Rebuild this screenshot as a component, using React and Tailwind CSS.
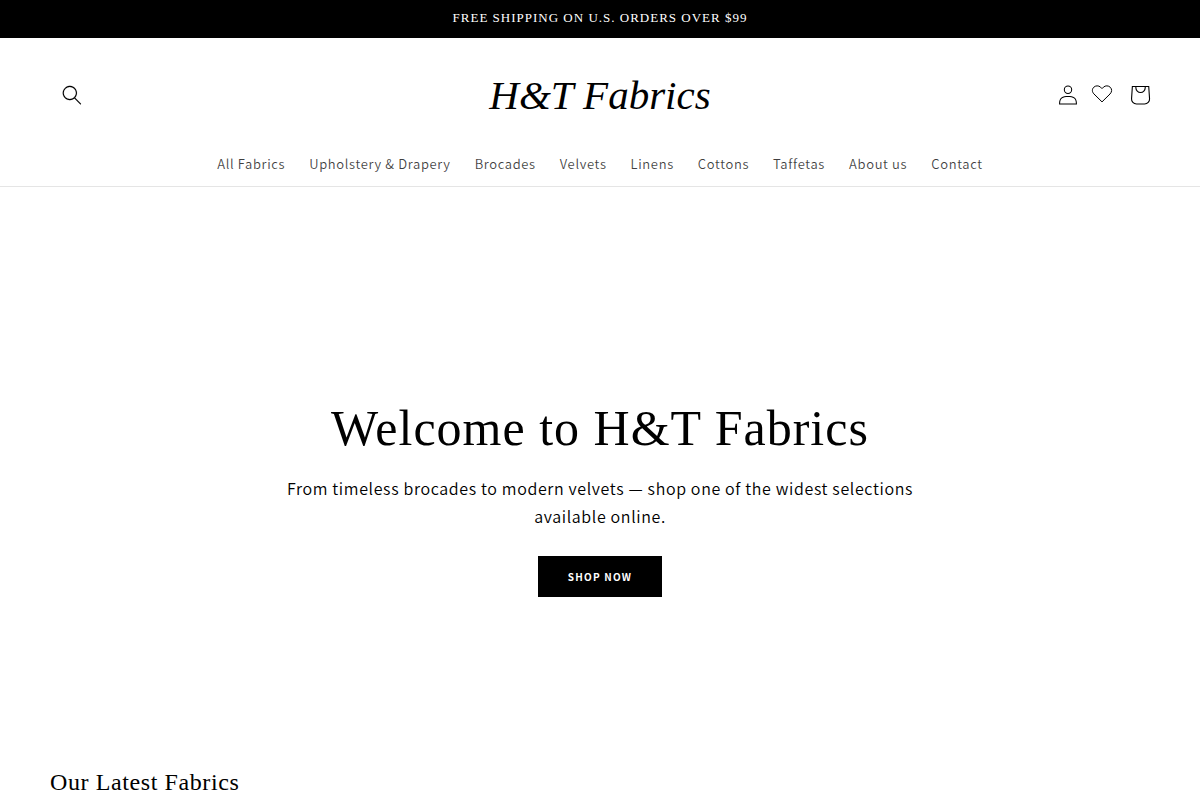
import React from 'react';

const navLinks = [
  'All Fabrics',
  'Upholstery & Drapery',
  'Brocades',
  'Velvets',
  'Linens',
  'Cottons',
  'Taffetas',
  'About us',
  'Contact',
];

function SearchIcon() {
  return (
    <svg className="w-5 h-5" viewBox="0 0 18 19" fill="none" aria-hidden="true">
      <path
        fillRule="evenodd"
        clipRule="evenodd"
        fill="currentColor"
        stroke="currentColor"
        strokeWidth="0.1"
        d="M11.03 11.68A5.784 5.784 0 112.85 3.5a5.784 5.784 0 018.18 8.18zm.26 1.12a6.78 6.78 0 11.72-.7l5.4 5.4a.5.5 0 11-.71.7l-5.41-5.4z"
      />
    </svg>
  );
}

function AccountIcon() {
  return (
    <svg className="w-5 h-5" viewBox="0 0 18 19" fill="none" aria-hidden="true">
      <path
        fillRule="evenodd"
        clipRule="evenodd"
        fill="currentColor"
        d="M6 4.5a3 3 0 116 0 3 3 0 01-6 0zm3-4a4 4 0 100 8 4 4 0 000-8zm5.58 12.15c1.12.83 1.83 2.24 1.92 4.85H1.5c.1-2.61.8-4.02 1.92-4.85C4.65 11.76 6.5 11.5 9 11.5s4.35.26 5.58 1.15zM9 10.5c-2.5 0-4.65.24-6.17 1.35C1.27 12.98.5 14.93.5 18v.5h17V18c0-3.07-.77-5.02-2.33-6.15-1.52-1.1-3.67-1.35-6.17-1.35z"
      />
    </svg>
  );
}

function HeartIcon() {
  return (
    <svg className="w-6 h-6" viewBox="0 0 24 24" fill="none" aria-hidden="true">
      <path
        stroke="currentColor"
        strokeWidth="1"
        strokeLinejoin="round"
        d="M12 18.9 4 11C1.9 8.9 1.9 6.1 3.7 4.3 5.6 2.4 8.6 2.4 10.5 4.1L12 5.6l1.5-1.5c1.9-1.7 4.9-1.7 6.8.2 1.8 1.8 1.8 4.6-.3 6.7z"
      />
    </svg>
  );
}

function CartIcon() {
  return (
    <svg className="w-11 h-11" viewBox="0 0 40 40" fill="none" aria-hidden="true">
      <path
        fillRule="evenodd"
        fill="currentColor"
        d="M15.75 11.8h-3.16l-.77 11.6a5 5 0 004.99 5.34h7.38a5 5 0 004.99-5.33L28.4 11.8zm0 1h-2.22l-.71 10.67a4 4 0 003.99 4.27h7.38a4 4 0 004-4.27l-.72-10.67h-2.22v.63a4.75 4.75 0 11-9.5 0zm8.5 0h-7.5v.63a3.75 3.75 0 107.5 0z"
      />
    </svg>
  );
}

function Header() {
  return (
    <header className="border-b border-black/10 px-[50px] pt-6 pb-3">
      <div className="grid grid-cols-[1fr_auto_1fr] items-center h-[66px]">
        <button type="button" aria-label="Search" className="w-11 h-11 flex items-center justify-center cursor-pointer">
          <SearchIcon />
        </button>

        <a href="#" className="font-['Liberation_Serif',serif] italic text-[41px] leading-none whitespace-nowrap">
          H&amp;T Fabrics
        </a>

        <div className="flex items-center justify-end -mr-3">
          <a href="#" aria-label="Log in" className="w-11 h-11 flex items-center justify-center">
            <AccountIcon />
          </a>
          <a href="#" aria-label="Wishlist" className="w-6 h-6 mr-1">
            <HeartIcon />
          </a>
          <a href="#" aria-label="Cart" className="w-11 h-11">
            <CartIcon />
          </a>
        </div>
      </div>

      <nav className="mt-[26px]">
        <ul className="flex flex-wrap justify-center gap-x-6">
          {navLinks.map((link) => (
            <li key={link}>
              <a href="#" className="block text-[13px] leading-5 tracking-wider font-[350] text-black/75 hover:underline">
                {link}
              </a>
            </li>
          ))}
        </ul>
      </nav>
    </header>
  );
}

function Hero() {
  return (
    <section className="flex flex-col items-center px-[50px] pt-52 pb-[169px] text-center">
      <h1 className="font-['Liberation_Serif',serif] text-[50px] leading-[66px] tracking-[1px]">
        Welcome to H&amp;T Fabrics
      </h1>
      <p className="max-w-[640px] mt-[13px] text-base leading-7 tracking-[0.04em] font-[350]">
        From timeless brocades to modern velvets — shop one of the widest selections available online.
      </p>
      <a
        href="#"
        className="mt-[26px] bg-black text-white px-[30px] text-[10px] leading-[41px] font-bold tracking-[0.12em]"
      >
        SHOP NOW
      </a>
    </section>
  );
}

export default function App() {
  return (
    <div className="min-h-screen bg-white text-black font-['Noto_Sans_CJK_SC',sans-serif]">
      <p className="bg-black text-white text-center font-['Liberation_Serif',serif] text-[13px] leading-9 pb-0.5 tracking-[1px]">
        FREE SHIPPING ON U.S. ORDERS OVER $99
      </p>
      <Header />
      <main>
        <Hero />
        <section className="px-[50px]">
          <h2 className="font-['Liberation_Serif',serif] text-2xl tracking-wide">Our Latest Fabrics</h2>
        </section>
      </main>
    </div>
  );
}
